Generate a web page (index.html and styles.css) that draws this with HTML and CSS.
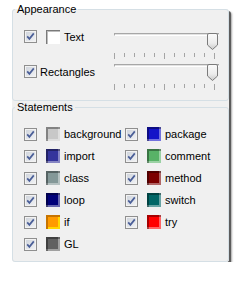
FILE: index.html
```html
<!DOCTYPE html>
<html>
    <head>
        <title>Display options</title>
        <link rel="stylesheet" href="styles.css">
    </head>
    <body>
        <svg class="defs" width="0" height="0">
            <defs>
                <linearGradient id="thumbfill" x1="0" y1="0" x2="0" y2="1">
                    <stop offset="0" stop-color="#fbfbfb"/>
                    <stop offset="0.6" stop-color="#ececec"/>
                    <stop offset="1" stop-color="#c9c9c9"/>
                </linearGradient>
                <symbol id="tick" viewBox="0 0 11 11">
                    <path d="M2.2 5.4 L4.4 7.9 L8.8 2.4" fill="none" stroke="#4b5f98" stroke-width="1.7"/>
                </symbol>
                <symbol id="knob" viewBox="0 0 11 17">
                    <path d="M0.5 2 Q0.5 0.5 2 0.5 H9 Q10.5 0.5 10.5 2 V12 L5.5 16.5 L0.5 12 Z" fill="url(#thumbfill)" stroke="#7b7b7b"/>
                </symbol>
            </defs>
        </svg>

        <div class="panel">
            <fieldset class="group appearance">
                <legend>Appearance</legend>
                <div class="body">
                    <div class="opts">
                        <div class="opt">
                            <span class="check"><svg><use href="#tick"/></svg></span>
                            <span class="swatch sw-text"></span>
                            <span>Text</span>
                        </div>
                        <div class="opt plain">
                            <span class="check"><svg><use href="#tick"/></svg></span>
                            <span>Rectangles</span>
                        </div>
                    </div>
                    <div class="sliders">
                        <div class="slider">
                            <div class="rail">
                                <div class="groove"></div>
                                <svg class="thumb"><use href="#knob"/></svg>
                            </div>
                            <div class="ticks">
                                <i class="major"></i><i></i><i></i><i></i><i></i><i class="major"></i><i></i><i></i><i></i><i></i><i class="major"></i>
                            </div>
                        </div>
                        <div class="slider">
                            <div class="rail">
                                <div class="groove"></div>
                                <svg class="thumb"><use href="#knob"/></svg>
                            </div>
                            <div class="ticks">
                                <i class="major"></i><i></i><i></i><i></i><i></i><i class="major"></i><i></i><i></i><i></i><i></i><i class="major"></i>
                            </div>
                        </div>
                    </div>
                </div>
            </fieldset>

            <fieldset class="group statements">
                <legend>Statements</legend>
                <div class="body">
                    <div class="opt"><span class="check"><svg><use href="#tick"/></svg></span><span class="swatch sw-background"></span><span>background</span></div>
                    <div class="opt"><span class="check"><svg><use href="#tick"/></svg></span><span class="swatch sw-package"></span><span>package</span></div>
                    <div class="opt"><span class="check"><svg><use href="#tick"/></svg></span><span class="swatch sw-import"></span><span>import</span></div>
                    <div class="opt"><span class="check"><svg><use href="#tick"/></svg></span><span class="swatch sw-comment"></span><span>comment</span></div>
                    <div class="opt"><span class="check"><svg><use href="#tick"/></svg></span><span class="swatch sw-class"></span><span>class</span></div>
                    <div class="opt"><span class="check"><svg><use href="#tick"/></svg></span><span class="swatch sw-method"></span><span>method</span></div>
                    <div class="opt"><span class="check"><svg><use href="#tick"/></svg></span><span class="swatch sw-loop"></span><span>loop</span></div>
                    <div class="opt"><span class="check"><svg><use href="#tick"/></svg></span><span class="swatch sw-switch"></span><span>switch</span></div>
                    <div class="opt"><span class="check"><svg><use href="#tick"/></svg></span><span class="swatch sw-if"></span><span>if</span></div>
                    <div class="opt"><span class="check"><svg><use href="#tick"/></svg></span><span class="swatch sw-try"></span><span>try</span></div>
                    <div class="opt"><span class="check"><svg><use href="#tick"/></svg></span><span class="swatch sw-gl"></span><span>GL</span></div>
                </div>
            </fieldset>
        </div>
    </body>
</html>
```

FILE: styles.css
```css
body {
    margin: 0;
    background: #fff;
    color: #000;
    font: 11px "Liberation Sans", Arial, sans-serif;
}
svg.defs {
    position: absolute;
    width: 0;
    height: 0;
}
.panel {
    position: relative;
    display: flex;
    flex-direction: column;
    width: 217px;
    margin: 3px 0 0 12px;
}
/* window face and shadow start at the first group's border line,
   so the legend sits above it on white */
.panel::before {
    content: "";
    position: absolute;
    top: 6px;
    left: 0;
    right: 0;
    bottom: 0;
    z-index: -1;
    background: #f0f0f0;
    border-radius: 3px;
    box-shadow: 2px 2px 0 #5c5c5c, 3px 3px 2px rgba(0, 0, 0, 0.35);
}
fieldset.group {
    margin: 0;
    padding: 0;
    min-width: 0;
    border: 1px solid #d5dfe5;
    border-radius: 3px;
    background: #f0f0f0;
}
.group legend {
    margin-left: 2px;
    padding: 0 2px;
    height: 13px;
    line-height: 13px;
}
.appearance .body {
    display: grid;
    grid-template-columns: 1fr 106px;
    height: 57px;
    padding: 11px 9px 16px 11px;
}
.opts {
    display: flex;
    flex-direction: column;
    gap: 18px;
    padding-top: 1px;
}
.sliders {
    display: flex;
    flex-direction: column;
    gap: 5px;
}
.statements {
    margin-top: 6px;
}
.statements .body {
    display: grid;
    grid-template-columns: 101px 1fr;
    grid-auto-rows: 22px;
    align-items: center;
    padding: 9px 0 6px 11px;
}

.opt {
    display: flex;
    align-items: center;
    height: 17px;
}
.check {
    width: 11px;
    height: 11px;
    margin-right: 9px;
    border: 1px solid #8f8f8f;
    background: linear-gradient(135deg, #cdd2da, #f3f4f6);
    box-shadow: inset 0 0 0 1px #f2f2f2;
}
.check svg {
    display: block;
    width: 11px;
    height: 11px;
}
.opt.plain .check {
    margin-right: 3px;
}
.swatch {
    width: 14px;
    height: 14px;
    margin-right: 4px;
    box-shadow: inset 2px 2px 0 rgba(0, 0, 0, 0.35), inset -2px -2px 0 rgba(255, 255, 255, 0.4);
}
.sw-text { background: #fff; box-shadow: inset 1px 1px 0 #7a7a7a, inset 2px 2px 0 #bdbdbd; }
.sw-background { background: #c8c8c8; }
.sw-import { background: #35359c; }
.sw-class { background: #849898; }
.sw-loop { background: #000078; }
.sw-if { background: #ff9a00; box-shadow: inset 2px 2px 0 #c77400, inset -2px -2px 0 #ffd800; }
.sw-gl { background: #616161; }
.sw-package { background: #1414c8; }
.sw-comment { background: #58b267; }
.sw-method { background: #7c0000; }
.sw-switch { background: #006666; }
.sw-try { background: #ff0000; }

.slider {
    height: 26px;
}
.rail {
    position: relative;
    height: 17px;
}
.groove {
    height: 1px;
    margin: 6px 0 0 1px;
    border-top: 1px solid #a7a7a7;
    border-bottom: 1px solid #fff;
    border-left: 1px solid #a7a7a7;
    background: #e2e2e2;
}
.thumb {
    position: absolute;
    top: 0;
    right: 1px;
    width: 11px;
    height: 17px;
}
.ticks {
    display: flex;
    justify-content: space-between;
    align-items: flex-start;
    height: 6px;
    margin: 3px 4px 0 1px;
}
.ticks i {
    width: 1px;
    height: 4px;
    background: #a5a5a5;
}
.ticks i.major {
    height: 6px;
}
```
